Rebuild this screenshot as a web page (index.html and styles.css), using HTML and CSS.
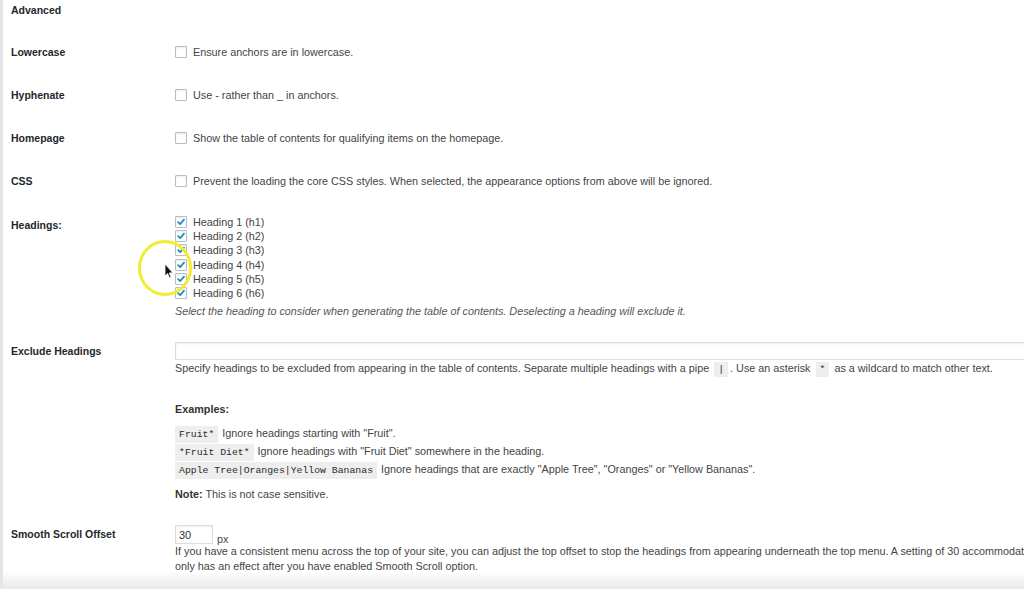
FILE: index.html
```html
<!DOCTYPE html>
<html lang="en">
<head>
    <meta charset="UTF-8">
    <title>Table of Contents Settings</title>
    <link rel="stylesheet" href="styles.css">
</head>
<body>

    <div class="page">
        <h2 class="section-title">Advanced</h2>

        <div class="row">
            <div class="label">Lowercase</div>
            <div class="field">
                <label class="opt"><span class="cb"></span>Ensure anchors are in lowercase.</label>
            </div>
        </div>

        <div class="row">
            <div class="label">Hyphenate</div>
            <div class="field">
                <label class="opt"><span class="cb"></span>Use - rather than _ in anchors.</label>
            </div>
        </div>

        <div class="row">
            <div class="label">Homepage</div>
            <div class="field">
                <label class="opt"><span class="cb"></span>Show the table of contents for qualifying items on the homepage.</label>
            </div>
        </div>

        <div class="row">
            <div class="label">CSS</div>
            <div class="field">
                <label class="opt"><span class="cb"></span>Prevent the loading the core CSS styles. When selected, the appearance options from above will be ignored.</label>
            </div>
        </div>

        <div class="row row-tall">
            <div class="label">Headings:</div>
            <div class="field">
                <div class="heading-list">
                    <label class="opt"><span class="cb checked"><svg viewBox="0 0 12 12"><path d="M2.6 6.2 L5 8.6 L9.6 3.2"/></svg></span>Heading 1 (h1)</label>
                    <label class="opt"><span class="cb checked"><svg viewBox="0 0 12 12"><path d="M2.6 6.2 L5 8.6 L9.6 3.2"/></svg></span>Heading 2 (h2)</label>
                    <label class="opt"><span class="cb checked"><svg viewBox="0 0 12 12"><path d="M2.6 6.2 L5 8.6 L9.6 3.2"/></svg></span>Heading 3 (h3)</label>
                    <label class="opt"><span class="cb checked"><svg viewBox="0 0 12 12"><path d="M2.6 6.2 L5 8.6 L9.6 3.2"/></svg></span>Heading 4 (h4)</label>
                    <label class="opt"><span class="cb checked"><svg viewBox="0 0 12 12"><path d="M2.6 6.2 L5 8.6 L9.6 3.2"/></svg></span>Heading 5 (h5)</label>
                    <label class="opt"><span class="cb checked"><svg viewBox="0 0 12 12"><path d="M2.6 6.2 L5 8.6 L9.6 3.2"/></svg></span>Heading 6 (h6)</label>
                </div>
                <p class="desc desc-italic">Select the heading to consider when generating the table of contents. Deselecting a heading will exclude it.</p>
            </div>
        </div>

        <div class="row row-tall">
            <div class="label label-input">Exclude Headings</div>
            <div class="field">
                <input type="text" class="wide-input">
                <p class="desc desc-tight">Specify headings to be excluded from appearing in the table of contents. Separate multiple headings with a pipe <code>|</code>. Use an asterisk <code>*</code> as a wildcard to match other text.</p>

                <p class="examples-title">Examples:</p>
                <ul class="examples">
                    <li><code>Fruit*</code> Ignore headings starting with "Fruit".</li>
                    <li><code>*Fruit Diet*</code> Ignore headings with "Fruit Diet" somewhere in the heading.</li>
                    <li><code>Apple Tree|Oranges|Yellow Bananas</code> Ignore headings that are exactly "Apple Tree", "Oranges" or "Yellow Bananas".</li>
                </ul>
                <p class="note"><strong>Note:</strong> This is not case sensitive.</p>
            </div>
        </div>

        <div class="row row-tall">
            <div class="label label-input">Smooth Scroll Offset</div>
            <div class="field">
                <div class="offset-line">
                    <input type="text" class="small-input" value="30">
                    <span class="unit">px</span>
                </div>
                <p class="desc desc-wide">If you have a consistent menu across the top of your site, you can adjust the top offset to stop the headings from appearing underneath the top menu. A setting of 30 accommodates the WordPress admin bar. This setting<br>only has an effect after you have enabled Smooth Scroll option.</p>
            </div>
        </div>
    </div>

    <!-- click highlight from the screen recording -->
    <div class="click-mark">
        <svg width="60" height="62" viewBox="0 0 60 62">
            <ellipse cx="30" cy="31" rx="25.5" ry="26.5" fill="none" stroke="#f2ec2e" stroke-width="3"/>
            <path d="M30 27 L30 39 L32.6 36.6 L34.6 41 L36.2 40.3 L34.3 36 L37.8 35.8 Z" fill="#111" stroke="#fff" stroke-width="0.8"/>
        </svg>
    </div>

    <div class="bottom-fade"></div>

</body>
</html>
```

FILE: styles.css
```css
html, body {
    margin: 0;
    height: 100%;
    overflow: hidden;
}

body {
    background: #fff;
    color: #444;
    font-family: "Liberation Sans", Arial, sans-serif;
    font-size: 10.8px;
    line-height: 14px;
    border-left: 3px solid #e4e4e4;
    box-sizing: border-box;
}

.page {
    width: 1400px;
}

.section-title {
    margin: 0;
    padding: 3px 0 14px 8px;
    font-size: 10.5px;
    line-height: 14px;
    font-weight: bold;
    color: #23282d;
}

.row {
    display: grid;
    grid-template-columns: 164px 1fr;
    padding-left: 8px;
}

.label {
    padding: 14px 0 15px;
    font-size: 10.5px;
    font-weight: bold;
    color: #23282d;
}

.field {
    padding: 14px 0 15px;
}

.row-tall .label {padding-top: 15px;}
.row-tall .field {padding: 12px 0;}
.row-tall .label-input {padding-top: 14px;}

.opt {
    display: flex;
    align-items: center;
    gap: 6px;
    height: 14px;
}

.cb {
    box-sizing: border-box;
    width: 12px;
    height: 12px;
    border: 1px solid #b9bdc1;
    border-radius: 1px;
    background: #fff;
    box-shadow: inset 0 1px 2px rgba(0, 0, 0, .08);
    flex: none;
}

.cb svg {
    display: block;
    width: 10px;
    height: 10px;
}

.cb path {
    fill: none;
    stroke: #1e8cbe;
    stroke-width: 2.1;
    stroke-linecap: round;
    stroke-linejoin: round;
}

.heading-list .opt {height: 14.2px;}

p {margin: 0;}

.desc {white-space: nowrap;}

.desc-italic {
    margin-top: 4px;
    font-style: italic;
    color: #555;
}

.desc-tight {margin-top: 1px;}

.wide-input {
    display: block;
    box-sizing: border-box;
    width: 900px;
    height: 18px;
    margin: 0;
    border: 1px solid #ddd;
    box-shadow: inset 0 1px 2px rgba(0, 0, 0, .07);
}

code {
    font-family: "Liberation Mono", "DejaVu Sans Mono", monospace;
    font-size: 9.8px;
    background: #eeeeee;
    padding: 2px 4px;
    color: #2a2a2a;
}

.desc code {margin: 0 2px;}

.examples-title {
    margin-top: 25px;
    font-weight: bold;
    color: #333;
}

.examples {
    list-style: none;
    margin: 8px 0 0;
    padding: 0;
}

.examples li {
    height: 18px;
    line-height: 18px;
    white-space: nowrap;
}

.examples code {
    padding: 3px 4px;
    margin-right: 1px;
}

.note {margin-top: 9px;}

.note strong {color: #333;}

.offset-line {
    display: flex;
    align-items: flex-end;
    gap: 4px;
}

.small-input {
    box-sizing: border-box;
    width: 38px;
    height: 19px;
    margin: 0;
    padding: 0 3px;
    border: 1px solid #ddd;
    box-shadow: inset 0 1px 2px rgba(0, 0, 0, .07);
    font-family: "Liberation Sans", Arial, sans-serif;
    font-size: 11px;
    color: #333;
}

.unit {line-height: 14px; margin-bottom: -2px;}

.desc-wide {
    margin-top: 0;
    line-height: 15px;
}

.click-mark {
    position: absolute;
    left: 135px;
    top: 237px;
    line-height: 0;
}

.bottom-fade {
    position: fixed;
    left: 0;
    right: 0;
    bottom: 0;
    height: 18px;
    background: linear-gradient(to bottom, rgba(236, 236, 236, 0), #e9e9e9);
}
```
